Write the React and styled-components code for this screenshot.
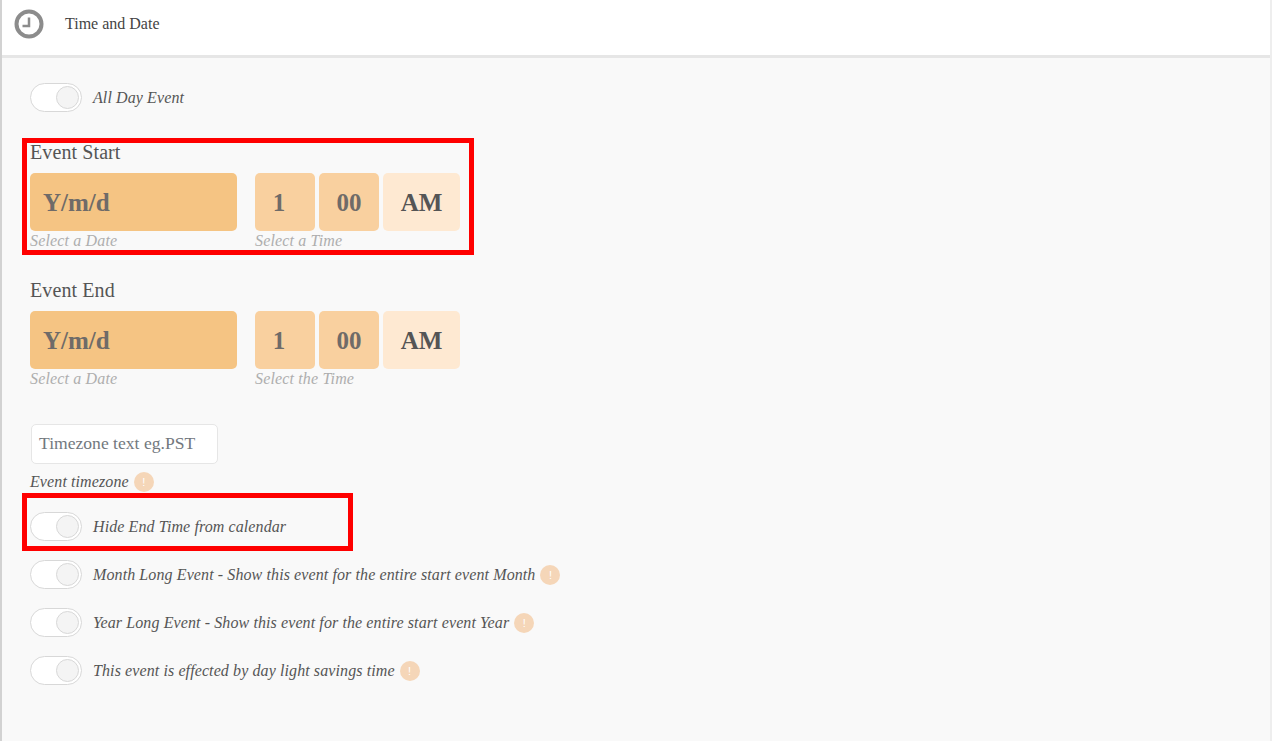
import React from 'react'
import styled, { createGlobalStyle } from 'styled-components'

const Global = createGlobalStyle`
  html, body {
    margin: 0;
    padding: 0;
    background: #f9f9f9;
  }
  body {
    font-family: "Liberation Serif", "Times New Roman", serif;
    color: #555;
  }
  * { box-sizing: border-box; }
`

const Panel = styled.div`
  width: 1272px;
  height: 741px;
  overflow: hidden;
  border-left: 2px solid #d2d2d2;
  border-right: 2px solid #eeeeee;
  background: #f9f9f9;
`

const Header = styled.div`
  height: 58px;
  padding: 0 0 7px 12px;
  display: flex;
  align-items: center;
  gap: 21px;
  background: #fff;
  border-bottom: 3px solid #e6e6e6;
  font-size: 16px;
  color: #444;
`

const Body = styled.div`
  padding: 25px 0 0 28px;
  display: flex;
  flex-direction: column;
  align-items: flex-start;
`

const ToggleRow = styled.div`
  height: 29px;
  margin-top: ${p => p.$top || 0}px;
  display: flex;
  align-items: center;
  gap: 11px;
`

const ToggleTrack = styled.div`
  width: 52px;
  height: 29px;
  padding: 2px 2px 2px 0;
  display: flex;
  justify-content: flex-end;
  background: #fff;
  border: 1px solid #d8d8d8;
  border-radius: 15px;
`

const ToggleKnob = styled.div`
  width: 23px;
  height: 23px;
  background: #f4f4f4;
  border: 1px solid #d8d8d8;
  border-radius: 50%;
`

const Label = styled.span`
  font-size: 16px;
  letter-spacing: 0.1px;
  font-style: italic;
  color: #555;
`

const EventBlock = styled.div`
  position: relative;
  margin-top: ${p => p.$top}px;
`

const Title = styled.div`
  height: 24px;
  font-size: 20px;
  letter-spacing: 0.1px;
  line-height: 23px;
  color: #555;
`

const Fields = styled.div`
  margin-top: 8px;
  display: flex;
`

const DateGroup = styled.div`
  width: 225px;
`

const Inputs = styled.div`
  display: flex;
  gap: 4px;
`

const TimeField = styled.div`
  width: ${p => p.$w}px;
  height: 58px;
  padding-top: 2px;
  padding-left: ${p => p.$pad || 0}px;
  padding-right: ${p => p.$padRight || 0}px;
  display: flex;
  align-items: center;
  justify-content: ${p => (p.$pad ? 'flex-start' : 'center')};
  background: ${p => p.$bg};
  border-radius: 5px;
  font-size: 25px;
  font-weight: bold;
  color: ${p => p.$fg || '#6f6b68'};
`

const Caption = styled.div`
  height: 18px;
  font-size: 16px;
  letter-spacing: 0.15px;
  line-height: 19px;
  font-style: italic;
  color: #aeaeae;
`

const Highlight = styled.div`
  position: absolute;
  left: ${p => p.$left}px;
  top: ${p => p.$top}px;
  width: ${p => p.$w}px;
  height: ${p => p.$h}px;
  border: 5px solid #ff0000;
  pointer-events: none;
`

const TimezoneBox = styled.div`
  width: 187px;
  height: 40px;
  margin: 37px 0 0 1px;
  padding: 0 0 2px 7px;
  display: flex;
  align-items: center;
  background: #fff;
  border: 1px solid #e6e6e6;
  border-radius: 5px;
  font-size: 17.6px;
  color: #72787e;
`

const TimezoneLabel = styled.div`
  height: 20px;
  margin-top: 8px;
  display: flex;
  align-items: center;
  gap: 5px;
`

const Badge = styled.span`
  width: 20px;
  height: 20px;
  margin-left: ${p => p.$left || 0}px;
  display: inline-flex;
  align-items: center;
  justify-content: center;
  flex: none;
  background: #f5d6b8;
  border-radius: 50%;
  font-family: "Liberation Sans", Arial, sans-serif;
  font-size: 11px;
  color: #fff;
`

const HideRow = styled.div`
  position: relative;
`

const ClockIcon = () => (
  <svg width="30" height="30" viewBox="0 0 30 30" fill="none">
    <circle cx="15" cy="15" r="12.5" stroke="#8c8c8c" strokeWidth="4" />
    <path d="M15 8.5V17H8.5" stroke="#8c8c8c" strokeWidth="2.5" />
  </svg>
)

const Toggle = ({ children, top, badge }) => (
  <ToggleRow $top={top}>
    <ToggleTrack><ToggleKnob /></ToggleTrack>
    <Label>{children}</Label>
    {badge && <Badge $left={-6}>!</Badge>}
  </ToggleRow>
)

const EventTime = ({ top, title, timeCaption, children }) => (
  <EventBlock $top={top}>
    <Title>{title}</Title>
    <Fields>
      <DateGroup>
        <TimeField $w={207} $pad={13} $bg="#f5c483">Y/m/d</TimeField>
        <Caption>Select a Date</Caption>
      </DateGroup>
      <div>
        <Inputs>
          <TimeField $w={60} $padRight={12} $bg="#f9d09f">1</TimeField>
          <TimeField $w={60} $bg="#f9d09f">00</TimeField>
          <TimeField $w={77} $bg="#fee9d2" $fg="#555">AM</TimeField>
        </Inputs>
        <Caption>{timeCaption}</Caption>
      </div>
    </Fields>
    {children}
  </EventBlock>
)

export default function App() {
  return (
    <>
      <Global />
      <Panel>
        <Header>
          <ClockIcon />
          <span>Time and Date</span>
        </Header>
        <Body>
          <Toggle>All Day Event</Toggle>
          <EventTime top={29} title="Event Start" timeCaption="Select a Time">
            <Highlight $left={-8} $top={-3} $w={452} $h={117} />
          </EventTime>
          <EventTime top={30} title="Event End" timeCaption="Select the Time" />
          <TimezoneBox>Timezone text eg.PST</TimezoneBox>
          <TimezoneLabel>
            <Label>Event timezone</Label>
            <Badge>!</Badge>
          </TimezoneLabel>
          <HideRow>
            <Toggle top={20}>Hide End Time from calendar</Toggle>
            <Highlight $left={-8} $top={1} $w={331} $h={58} />
          </HideRow>
          <Toggle top={19} badge>Month Long Event - Show this event for the entire start event Month</Toggle>
          <Toggle top={19} badge>Year Long Event - Show this event for the entire start event Year</Toggle>
          <Toggle top={19} badge>This event is effected by day light savings time</Toggle>
        </Body>
      </Panel>
    </>
  )
}
